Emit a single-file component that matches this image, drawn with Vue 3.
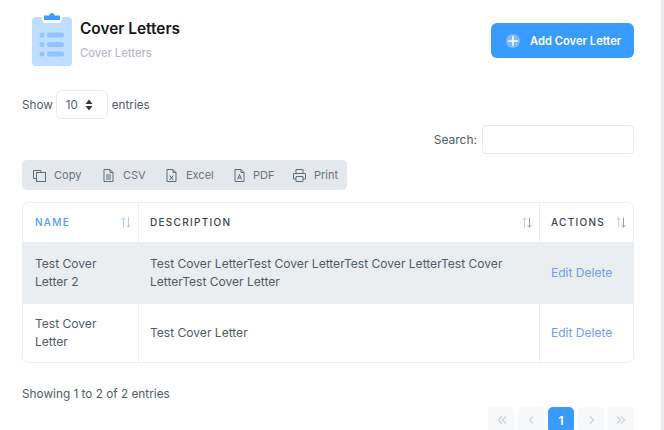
<script setup>
const rows = [
  { name: 'Test Cover Letter 2', desc: 'Test Cover LetterTest Cover LetterTest Cover LetterTest Cover LetterTest Cover Letter' },
  { name: 'Test Cover Letter', desc: 'Test Cover Letter' }
]
const tools = ['Copy', 'CSV', 'Excel', 'PDF', 'Print']
const pages = [
  { key: 'first', d: 'M6 1.500 2.500 5 6 8.500M10 1.500 6.500 5l3.500 3.500' },
  { key: 'prev', d: 'M7 1.500 3.500 5 7 8.500' },
  { key: 'cur', label: '1' },
  { key: 'next', d: 'M4 1.500 7.500 5 4 8.500' },
  { key: 'last', d: 'M1 1.500 4.500 5 1 8.500M5 1.500 8.500 5 5 8.500' }
]
const heads = [
  { label: 'NAME', cls: 'c1 active' },
  { label: 'DESCRIPTION', cls: 'c2' },
  { label: 'ACTIONS', cls: 'c3' }
]
</script>

<template>
  <div class="page">
    <div class="main">
      <header class="head">
        <div class="brand">
          <svg class="clip" width="40" height="54" viewBox="0 0 40 54">
            <rect x="0" y="4" width="40" height="49" rx="4" fill="#bfdeff" />
            <path d="M10 4h20v2a4 4 0 0 1-4 4H14a4 4 0 0 1-4-4z" fill="#fff" />
            <path d="M12 2.500h5.500a2.500 2.500 0 0 1 5 0H27a1 1 0 0 1 1 1V7H12z" fill="#3c9bff" />
            <g fill="#8fc4ff">
              <circle cx="10" cy="22" r="2.500" /><rect x="15" y="19.500" width="17" height="5" rx="2.500" />
              <circle cx="10" cy="31.500" r="2.500" /><rect x="15" y="29" width="17" height="5" rx="2.500" />
              <circle cx="10" cy="41" r="2.500" /><rect x="15" y="38.500" width="17" height="5" rx="2.500" />
            </g>
          </svg>
          <div class="titles">
            <h1>Cover Letters</h1>
            <p>Cover Letters</p>
          </div>
        </div>
        <button class="add">
          <span class="plus">
            <svg width="14" height="14" viewBox="0 0 14 14"><path d="M7 2.500v9M2.500 7h9" stroke="#fff" stroke-width="1.500" stroke-linecap="round" /></svg>
          </span>
          Add Cover Letter
        </button>
      </header>

      <div class="length">
        <span>Show</span>
        <div class="select">
          <span>10</span>
          <svg width="8" height="12" viewBox="0 0 8 12"><path d="M4 .5 7.500 5h-7zM4 11.500.5 7h7z" fill="#343a40" /></svg>
        </div>
        <span>entries</span>
      </div>

      <div class="search">
        <label>Search:</label>
        <div class="input"></div>
      </div>

      <div class="tools">
        <div v-for="t in tools" :key="t" class="tool" :class="'tool-' + t">
          <svg width="15" height="15" viewBox="0 0 15 15" fill="none" stroke="#5e6b78" stroke-width="1">
            <template v-if="t === 'Copy'">
              <path d="M4.500 10.500h-3v-8h7.500v2" /><rect x="4.500" y="4.500" width="9" height="9" />
            </template>
            <template v-else-if="t === 'CSV'">
              <path d="M3 1.500h6l3 3v9H3zM9 1.500v3h3M5 7h5M5 9h5M5 11h5" />
            </template>
            <template v-else-if="t === 'Excel'">
              <path d="M3 1.500h6l3 3v9H3zM9 1.500v3h3M5.700 7.500l3.600 4.500M9.300 7.500 5.700 12" />
            </template>
            <template v-else-if="t === 'PDF'">
              <path d="M3 1.500h6l3 3v9H3zM9 1.500v3h3M7.500 6.500 5.500 11.500M7.500 6.500l2 5M6.300 10h2.400" />
            </template>
            <template v-else>
              <path d="M4 5V1.500h7V5M4 11H1.500V5.500h12V11H11M4 8.500h7v5H4z" />
            </template>
          </svg>
          <span>{{ t }}</span>
        </div>
      </div>

      <div class="table">
        <div class="row hrow">
          <div v-for="h in heads" :key="h.label" class="cell th" :class="h.cls">
            {{ h.label }}
            <svg class="sort" width="10" height="11" viewBox="0 0 10 11" fill="none">
              <path class="up" d="M2.500 10.500V.8M.7 2.800 2.500.8l1.800 2" />
              <path class="down" d="M7.500.5v9.700M5.700 8.200l1.800 2 1.800-2" />
            </svg>
          </div>
        </div>
        <div v-for="(r, i) in rows" :key="i" class="row" :class="i === 0 ? 'odd' : 'even'">
          <div class="cell c1">{{ r.name }}</div>
          <div class="cell c2">{{ r.desc }}</div>
          <div class="cell c3 links">Edit Delete</div>
        </div>
      </div>

      <div class="info">Showing 1 to 2 of 2 entries</div>

      <nav class="pager">
        <span v-for="p in pages" :key="p.key" class="pg" :class="{ on: p.label }">
          <template v-if="p.label">{{ p.label }}</template>
          <svg v-else width="10" height="10" viewBox="0 0 10 10" fill="none" stroke="#cfd3d8" stroke-width="1.300"><path :d="p.d" /></svg>
        </span>
      </nav>
    </div>
    <div class="strip"></div>
  </div>
</template>

<style>
html, body { margin: 0; overflow: hidden; background: #fff; }
</style>

<style scoped>
.page {
  width: 664px;
  height: 430px;
  display: flex;
  overflow: hidden;
  font-family: "Inter", "Open Sans", sans-serif;
  font-size: 12px;
  color: #525c66;
  background: #fff;
}
.main { width: 612px; margin-left: 22px; flex: none; }
.strip { width: 3px; margin-left: 27px; height: 430px; background: #e9edf6; }

.head { display: flex; justify-content: space-between; height: 90px; }
.brand { display: flex; padding: 13px 0 0 10px; }
.clip { display: block; }
.titles { margin-left: 8px; padding-top: 7px; }
h1 { margin: 0; font-size: 15.400px; line-height: 18px; font-weight: 600; color: #15171c; }
p { margin: 8px 0 0; font-size: 11.200px; line-height: 14px; font-weight: 500; color: #b8bcc6; }
.add {
  margin-top: 23px;
  width: 143px;
  height: 35px;
  border: 0;
  border-radius: 6px;
  background: #3a9bff;
  color: #fff;
  font: 600 11.200px "Inter", sans-serif;
  display: flex;
  align-items: center;
  padding: 0 0 0 15px;
  white-space: nowrap;
}
.plus {
  width: 14px;
  height: 14px;
  border-radius: 50%;
  background: #7bbaff;
  margin-right: 10px;
  display: flex;
}

.length { display: flex; align-items: center; height: 29px; }
.select {
  margin: 0 4px 0 3px;
  width: 52px;
  height: 29px;
  box-sizing: border-box;
  border: 1px solid #e9ecef;
  border-radius: 6px;
  display: flex;
  align-items: center;
  justify-content: space-between;
  padding: 0 14px 0 9px;
  font-size: 11.500px;
}
.length > span { font-size: 11.700px; }

.search { display: flex; justify-content: flex-end; align-items: center; gap: 5px; margin-top: 6px; }
.input {
  width: 152px;
  height: 29px;
  box-sizing: border-box;
  border: 1px solid #e6e9ed;
  border-radius: 4px;
}

.tools {
  margin-top: 6px;
  width: 325px;
  height: 30px;
  box-sizing: border-box;
  background: #e4e8ec;
  border-radius: 5px;
  display: flex;
  align-items: center;
  padding-left: 10px;
  font-size: 11px;
  color: #6b747e;
}
.tool { display: flex; align-items: center; gap: 7px; }
.tool-Copy { width: 69px; }
.tool-CSV { width: 63px; }
.tool-Excel { width: 68px; }
.tool-PDF { width: 60px; gap: 6px; }

.table {
  margin-top: 12px;
  width: 612px;
  height: 161px;
  box-sizing: border-box;
  border: 1px solid #edeff2;
  border-radius: 6px;
  overflow: hidden;
}
.row { display: grid; grid-template-columns: 116px 401px 1fr; }
.hrow { height: 39px; }
.odd { height: 62px; background: #ebeef1; }
.even { height: 58px; }
.cell {
  position: relative;
  display: flex;
  align-items: center;
  padding: 0 11px;
  line-height: 18px;
  border-right: 1px solid #edeff2;
  font-size: 12.050px;
  color: #525c66;
}
.c1 { padding-left: 12px; }
.c3 { border-right: 0; }
.th { font-size: 10px; font-weight: 500; letter-spacing: 1.300px; color: #3d444c; padding-bottom: 2px; box-sizing: border-box; }
.active { color: #4d9bff; }
.sort { position: absolute; right: 7px; top: 14px; }
.up { stroke: #c9cdd2; stroke-width: 1; }
.down { stroke: #9a9fa5; stroke-width: 1; }
.active .up { stroke: #a9d0ff; }
.active .down { stroke: #b6c6d8; }
.links { color: #6f9cf7; white-space: nowrap; }

.info { margin-top: 22px; height: 18px; line-height: 18px; font-size: 11.800px; }
.pager { display: flex; justify-content: flex-end; gap: 4px; margin-top: 4px; }
.pg {
  width: 26px;
  height: 26px;
  border-radius: 5px;
  background: #f7f8fa;
  display: flex;
  align-items: center;
  justify-content: center;
}
.pg.on { background: #3a9bff; color: #fff; font-weight: 600; font-size: 12px; }
</style>
